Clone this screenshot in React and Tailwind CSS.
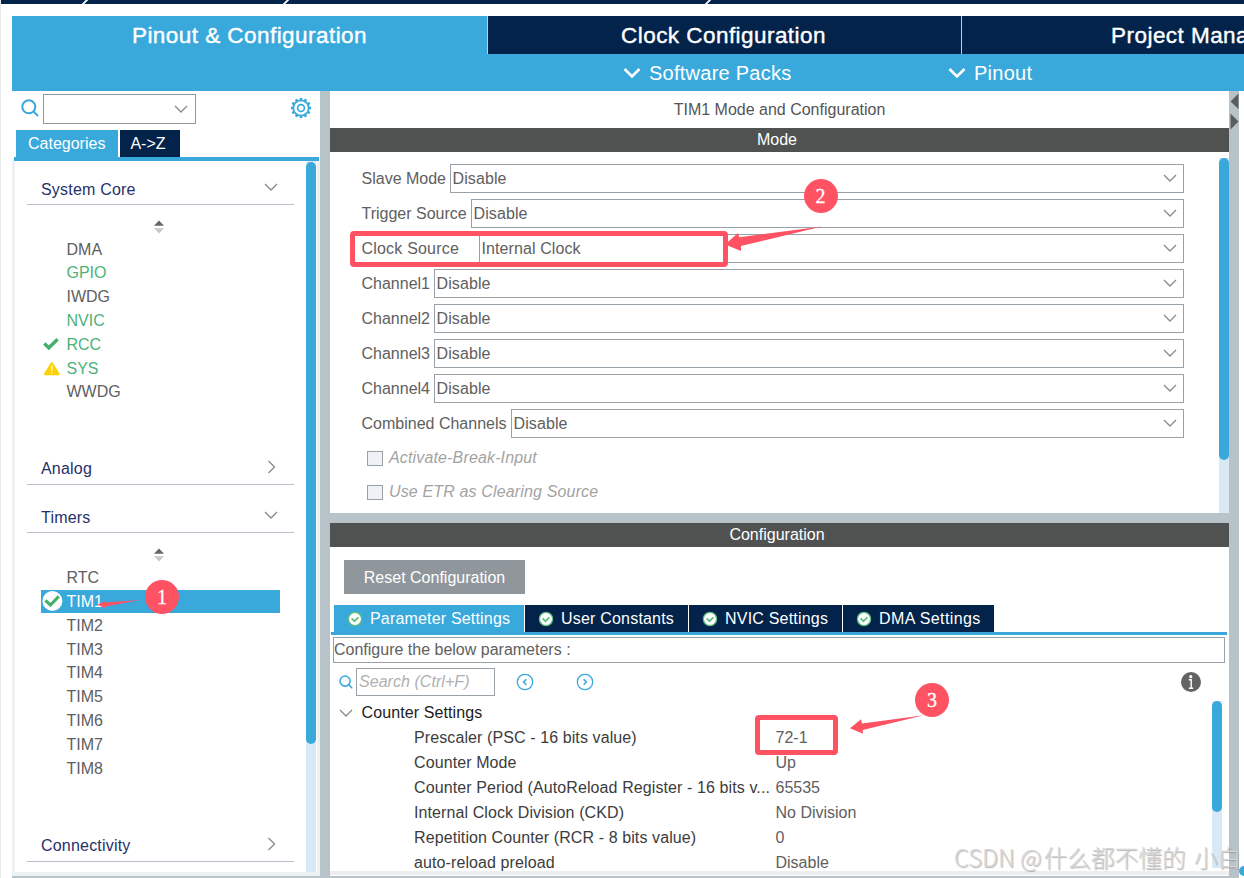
import React from 'react';
import clsx from 'clsx';

const systemCore = [
  { name: 'DMA' },
  { name: 'GPIO', on: true },
  { name: 'IWDG' },
  { name: 'NVIC', on: true },
  { name: 'RCC', on: true, icon: 'check' },
  { name: 'SYS', on: true, icon: 'warn' },
  { name: 'WWDG' },
];

const timers = [
  { name: 'RTC' },
  { name: 'TIM1', selected: true },
  { name: 'TIM2' },
  { name: 'TIM3' },
  { name: 'TIM4' },
  { name: 'TIM5' },
  { name: 'TIM6' },
  { name: 'TIM7' },
  { name: 'TIM8' },
];

const modes = [
  { label: 'Slave Mode', value: 'Disable', width: 'w-[88.5px]' },
  { label: 'Trigger Source', value: 'Disable', width: 'w-[109.5px]' },
  { label: 'Clock Source', value: 'Internal Clock', width: 'w-[117.5px] tracking-[0.2px]' },
  { label: 'Channel1', value: 'Disable', width: 'w-[72.5px]' },
  { label: 'Channel2', value: 'Disable', width: 'w-[72.5px]' },
  { label: 'Channel3', value: 'Disable', width: 'w-[72.5px]' },
  { label: 'Channel4', value: 'Disable', width: 'w-[72.5px]' },
  { label: 'Combined Channels', value: 'Disable', width: 'w-[149.5px]' },
];

const params = [
  ['Prescaler (PSC - 16 bits value)', '72-1'],
  ['Counter Mode', 'Up'],
  ['Counter Period (AutoReload Register - 16 bits v...', '65535'],
  ['Internal Clock Division (CKD)', 'No Division'],
  ['Repetition Counter (RCR - 8 bits value)', '0'],
  ['auto-reload preload', 'Disable'],
];

const configTabs = [
  { label: 'Parameter Settings', width: 'w-[190px] tracking-[0.18px]', active: true },
  { label: 'User Constants', width: 'w-[163px] tracking-[0.2px]' },
  { label: 'NVIC Settings', width: 'w-[153px] tracking-[0.2px]' },
  { label: 'DMA Settings', width: 'w-[151px] tracking-[0.4px]' },
];

function Chevron({ className = '', right = false }) {
  return (
    <svg viewBox="0 0 14 14" className={clsx('h-3.5 w-3.5 shrink-0', className)} fill="none" stroke="#8c8c8c" strokeWidth="1.4">
      {right ? <path d="M4.5 1 L10.5 7 L4.5 13" /> : <path d="M1 4 L7 10 L13 4" />}
    </svg>
  );
}

function SearchIcon({ className = '' }) {
  return (
    <svg viewBox="0 0 18 18" className={clsx('shrink-0', className)} fill="none" stroke="#39a9dc" strokeWidth="2">
      <circle cx="7.8" cy="7.8" r="6.5" />
      <path d="M12.4 12.4 L17 17" />
    </svg>
  );
}

// Toothed ring around a small hub
function GearIcon() {
  const teeth = Array.from({ length: 12 }, (_, i) => i * 30);
  return (
    <svg viewBox="0 0 22 22" className="h-[22px] w-[22px]" fill="none" stroke="#39a9dc">
      <circle cx="11" cy="11" r="7.7" strokeWidth="1.7" />
      <circle cx="11" cy="11" r="3.4" strokeWidth="1.7" />
      {teeth.map((a) => (
        <path key={a} d="M11 3.2 V0.9" strokeWidth="2.6" transform={`rotate(${a} 11 11)`} />
      ))}
    </svg>
  );
}

function SortIcon() {
  return (
    <svg viewBox="0 0 10 14" className="h-3.5 w-2.5">
      <path d="M0 5.7 L5 0.5 L10 5.7 Z" fill="#666" />
      <path d="M0 8.3 L5 13.5 L10 8.3 Z" fill="#c9c9c9" />
    </svg>
  );
}

function TabCheck() {
  return (
    <svg viewBox="0 0 16 16" className="h-4 w-4 shrink-0">
      <circle cx="8" cy="8" r="6.6" fill="#fff" stroke="#5fbd80" strokeWidth="1.3" />
      <path d="M4.6 7.4 L7.4 10.2 L11.4 6.4" fill="none" stroke="#5fbd80" strokeWidth="1.7" />
    </svg>
  );
}

function StatusIcon({ item }) {
  if (item.selected) {
    return (
      <svg viewBox="0 0 22 22" className="h-[22px] w-[22px]">
        <circle cx="11.4" cy="11" r="10" fill="#fff" />
        <path d="M4.4 10.3 L9.4 15 L17.8 6.4" fill="none" stroke="#45b06b" strokeWidth="3.2" />
      </svg>
    );
  }
  if (item.icon === 'check') {
    return (
      <svg viewBox="0 0 22 22" className="h-[22px] w-[22px]">
        <path d="M3.3 10.6 L7.8 14.8 L16.6 6.2" fill="none" stroke="#45b06b" strokeWidth="3.4" />
      </svg>
    );
  }
  if (item.icon === 'warn') {
    return (
      <svg viewBox="0 0 22 22" className="h-[22px] w-[22px]">
        <path d="M10.8 6 L17.8 17.2 H3.8 Z" fill="#fdd106" stroke="#fdd106" strokeWidth="2" strokeLinejoin="round" />
        <path d="M10.8 8.4 V13.6 M10.8 14.8 V16.4" stroke="#fff" strokeWidth="1.3" />
      </svg>
    );
  }
  return null;
}

function SectionHeader({ title, open, className }) {
  return (
    <div className={clsx('ml-3 flex w-[267px] items-center justify-between border-b border-[#b7c0c8] pl-3.5 pr-4', className)}>
      <span className="pt-[3px] tracking-[0.2px] text-[#26306b]">{title}</span>
      <Chevron right={!open} className="-mt-0.5" />
    </div>
  );
}

function PeripheralList({ items }) {
  return (
    <div className="ml-[26px] w-[239px]">
      {items.map((item) => (
        <div
          key={item.name}
          className={clsx(
            'flex h-[23.8px] items-center',
            item.selected ? 'bg-[#39a9dc] text-white' : item.on ? 'text-[#4db277]' : 'text-[#606060]'
          )}
        >
          <div className="w-[25.5px] shrink-0"><StatusIcon item={item} /></div>
          <span className="pt-px">{item.name}</span>
        </div>
      ))}
    </div>
  );
}

function Sidebar() {
  return (
    <aside className="flex w-[308px] shrink-0 flex-col">
      <div className="flex h-[39px] items-start pt-[3px]">
        <SearchIcon className="ml-[9px] mt-[5px] h-[18px] w-[18px]" />
        <div className="ml-1 flex h-[30px] w-[153px] items-center justify-end border border-[#8f979c] pr-[7px]">
          <Chevron />
        </div>
        <div className="ml-[94px] mt-[3px]"><GearIcon /></div>
      </div>
      <div className="ml-1 flex h-[27px] gap-0.5 text-white">
        <div className="w-[102px] bg-[#39a9dc] pl-3 leading-[27px]">Categories</div>
        <div className="w-[60px] bg-[#03234b] pr-1 text-center leading-[27px]">A-&gt;Z</div>
      </div>
      <div className="ml-0.5 h-[3.5px] w-[305px] bg-[#39a9dc]" />
      <div className="flex grow justify-between border-x-[3px] border-b-4 border-[#eef1f4]">
        <div>
          <SectionHeader title="System Core" open className="h-[44.5px] pt-3" />
          <div className="flex h-[32.2px] items-center justify-center pl-[9px] pt-3"><SortIcon /></div>
          <PeripheralList items={systemCore} />
          <SectionHeader title="Analog" className="mt-[48px] h-[33px]" />
          <SectionHeader title="Timers" open className="mt-[16px] h-8" />
          <div className="flex h-[33px] items-center justify-center pl-[9px] pt-3"><SortIcon /></div>
          <PeripheralList items={timers} />
          <SectionHeader title="Connectivity" className="mt-[49px] h-[33px]" />
        </div>
        <div className="mr-px w-2.5 bg-[#d9e8f5]">
          <div className="mt-px h-[582px] rounded-full bg-[#39a9dc]" />
        </div>
      </div>
    </aside>
  );
}

function TitleBar({ children }) {
  return <div className="h-6 shrink-0 bg-[#505251] pr-[5px] text-center leading-6 text-white">{children}</div>;
}

function ModePanel() {
  return (
    <section className="flex h-[422px] shrink-0 flex-col">
      <div className="h-[36.5px] shrink-0 text-center leading-[37px] text-[#555]">TIM1 Mode and Configuration</div>
      <TitleBar>Mode</TitleBar>
      <div className="flex grow justify-between">
        <div className="ml-[31.5px] w-[822.5px] pt-3 text-[#606060]">
          {modes.map((m) => (
            <div key={m.label} className="mb-1.5 flex h-[29px] items-center">
              <span className={clsx('shrink-0 whitespace-nowrap pt-px', m.width)}>{m.label}</span>
              <div className="flex h-full grow items-center justify-between border border-[#98a1a8] pl-[1.5px] pr-1.5">
                <span className="pt-px tracking-[0.1px]">{m.value}</span>
                <Chevron />
              </div>
            </div>
          ))}
          {['Activate-Break-Input', 'Use ETR as Clearing Source'].map((label) => (
            <div key={label} className="flex h-[34px] items-center pb-[6px] pl-[5.5px] italic tracking-[0.15px] text-[#a3a3a3]">
              <span className="mr-[6.5px] mt-0.5 h-[15.5px] w-[15.5px] border border-[#98a1a8] bg-[#eff1f4]" />
              {label}
            </div>
          ))}
        </div>
        <div className="mt-1.5 w-2.5 bg-[#d9e8f5]">
          <div className="h-[302px] rounded-full bg-[#39a9dc]" />
        </div>
      </div>
    </section>
  );
}

function ConfigPanel() {
  return (
    <section className="flex h-[352px] flex-col overflow-hidden border-b-4 border-[#eceef0]">
      <TitleBar>Configuration</TitleBar>
      <button className="ml-3.5 mt-[13px] h-[34px] w-[181px] shrink-0 bg-[#8f979c] pt-0.5 text-white">
        Reset Configuration
      </button>
      <div className="ml-1 mt-[11px] flex h-[27px] shrink-0 gap-px text-white">
        {configTabs.map((t) => (
          <div
            key={t.label}
            className={clsx(
              'flex items-center gap-[7.5px] whitespace-nowrap pl-[12.5px]',
              t.width,
              t.active ? 'bg-[#39a9dc]' : 'bg-[#03234b]'
            )}
          >
            <TabCheck />
            {t.label}
          </div>
        ))}
      </div>
      <div className="ml-px h-[3px] w-[896px] shrink-0 bg-[#39a9dc]" />
      <div className="ml-[3px] mt-[2px] h-[26px] w-[892px] shrink-0 border border-[#98a1a8] leading-6 text-[#606060]">
        Configure the below parameters :
      </div>
      <div className="mt-[5px] flex h-[28px] shrink-0 items-center pl-[9px]">
        <SearchIcon className="h-3.5 w-3.5" />
        <div className="ml-[3px] h-7 w-[139px] border border-[#98a1a8] pl-[2px] leading-[26px] italic tracking-[0.05px] text-[#b0b0b0]">
          Search (Ctrl+F)
        </div>
        <svg viewBox="0 0 18 18" className="ml-[21px] h-[18px] w-[18px]" fill="none" stroke="#39a9dc">
          <circle cx="9" cy="9" r="7.7" strokeWidth="1.3" />
          <path d="M10.4 6.2 L7.6 9 L10.4 11.8" strokeWidth="1.6" />
        </svg>
        <svg viewBox="0 0 18 18" className="ml-[42px] h-[18px] w-[18px]" fill="none" stroke="#39a9dc">
          <circle cx="9" cy="9" r="7.7" strokeWidth="1.3" />
          <path d="M7.6 6.2 L10.4 9 L7.6 11.8" strokeWidth="1.6" />
        </svg>
        <svg viewBox="0 0 20 20" className="ml-[587px] h-5 w-5">
          <circle cx="10" cy="10" r="10" fill="#636363" />
          <circle cx="9.8" cy="4.7" r="1.6" fill="#fff" />
          <path d="M7.8 7.8 H10.2 V16 M7.8 16.2 H12.2" fill="none" stroke="#fff" strokeWidth="1.4" />
        </svg>
      </div>
      <div className="mt-1 flex">
        <div className="w-[873px] shrink-0 text-[#3c3c3c]">
          <div className="flex h-[25px] items-center pl-[9px] text-[#1c1c1c]">
            <Chevron className="mr-[8.5px]" />
            <span className="tracking-[0.1px]">Counter Settings</span>
          </div>
          {params.map(([name, value]) => (
            <div key={name} className="flex h-[25px] items-center whitespace-nowrap pl-[84px]">
              <span className="w-[361.5px] tracking-[0.1px]">{name}</span>
              <span className="text-[#606060]">{value}</span>
            </div>
          ))}
        </div>
        <div className="ml-[9px] mt-px h-[167px] w-2.5 bg-[#d9e8f5]">
          <div className="h-[111px] rounded-full bg-[#39a9dc]" />
        </div>
      </div>
    </section>
  );
}

function Header() {
  return (
    <header className="ml-3 h-[75px] w-[1424px] bg-[#39a9dc] text-white">
      <div className="flex h-[38px] text-center text-[22.5px] leading-[40px] tracking-[0.45px] [-webkit-text-stroke:0.4px_white]">
        <div className="w-[475px]">Pinout &amp; Configuration</div>
        <div className="w-[474px] border-l border-[#c4ced6] bg-[#03234b] pr-0.5">Clock Configuration</div>
        <div className="w-[475px] border-l border-[#c4ced6] bg-[#03234b] pr-1">Project Manager</div>
      </div>
      <div className="flex h-[37px] items-center text-[20px] tracking-[0.25px]">
        <HeaderMenu label="Software Packs" className="ml-[611px] w-[325px]" />
        <HeaderMenu label="Pinout" />
      </div>
    </header>
  );
}

function HeaderMenu({ label, className }) {
  return (
    <div className={clsx('flex items-center gap-2', className)}>
      <svg viewBox="0 0 18 12" className="h-3 w-[18px]" fill="none" stroke="#fff" strokeWidth="2.6">
        <path d="M1.5 2 L9 9.5 L16.5 2" />
      </svg>
      <span>{label}</span>
    </div>
  );
}

function Badge({ n, className }) {
  return (
    <div className={clsx('absolute flex h-[34px] w-[34px] items-center justify-center rounded-full bg-[#ff5263] pb-px font-["Liberation_Serif",serif] text-[20px] text-white [-webkit-text-stroke:0.3px_white]', className)}>
      {n}
    </div>
  );
}

// Numbered callouts drawn over the window
function Annotations() {
  return (
    <div className="pointer-events-none absolute inset-y-0 -left-px w-[1244px]">
      <div className="absolute left-[350px] top-[231px] h-[36px] w-[377.5px] rounded-[4px] border-[5px] border-[#ff5263]" />
      <div className="absolute left-[755px] top-[715px] h-[40px] w-[82.5px] rounded-[4px] border-[5px] border-[#ff5263]" />
      <svg viewBox="0 0 1244 878" className="absolute inset-0 h-full w-full" fill="#ff5263">
        <path d="M97.5 604.7 L104.5 601.3 L105 602.6 L140 600 L105.3 606.4 L105.3 608.3 Z" />
        <path d="M725 244.5 L738 233 L739.3 237.3 L822 226.4 L741 246 L741 251 Z" />
        <path d="M850 728.3 L861 719.3 L862 723.4 L924 715.3 L862.6 730 L863 733.7 Z" />
      </svg>
      <Badge n="1" className="left-[145px] top-[580px]" />
      <Badge n="2" className="left-[803.5px] top-[179px]" />
      <Badge n="3" className="left-[915px] top-[683px]" />
    </div>
  );
}

export default function App() {
  return (
    <div className='relative h-[878px] w-[1244px] overflow-hidden border-l border-[#e8eaec] bg-white font-["Liberation_Sans",Arial,sans-serif] text-[16px] leading-5'>
      <div className="-ml-px">
        <div className="h-1 bg-[#03234b]">
          <svg viewBox="0 0 1244 4" className="h-1 w-[1244px]" stroke="#fff" strokeWidth="1.8">
            <path d="M82 5 L88 -1 M283 5 L289 -1 M705 5 L711 -1" />
          </svg>
        </div>
        <div className="h-3" />
        <Header />
        <div className="ml-3 flex h-[785px] w-[1232px]">
          <Sidebar />
          <div className="w-2.5 shrink-0 bg-[#b7c2c9]" />
          <main className="flex w-[899px] shrink-0 flex-col">
            <ModePanel />
            <div className="h-2.5 shrink-0 bg-[#b7c2c9]" />
            <ConfigPanel />
          </main>
          <div className="w-[10px] shrink-0 bg-[#b7c2c9]">
            <svg viewBox="0 0 10 40" className="h-10 w-2.5" fill="#5c5c5c">
              <path d="M9.5 2.5 V18 L1.5 10.5 Z M1.5 22.5 V38.5 L9.5 30.5 Z" />
            </svg>
          </div>
        </div>
        <div className="ml-3 h-0.5 w-[1227px] bg-[#b7c2c9]" />
      </div>
      <div className="absolute left-[1238px] top-[866px] h-2.5 w-2.5 rounded-full bg-[#39a9dc]" />
      <Annotations />
      <div className='absolute left-[953px] top-[841px] whitespace-nowrap font-["Noto_Sans_CJK_SC",sans-serif] text-[23.7px] font-light leading-8 text-[#d6d6d6] [text-shadow:1px_1px_1px_#80808099]'>
        <span className="mr-0.5 tracking-[0px]">CSDN @</span>什么都不懂的<span className="ml-[3px]"> 小白</span>
      </div>
    </div>
  );
}
